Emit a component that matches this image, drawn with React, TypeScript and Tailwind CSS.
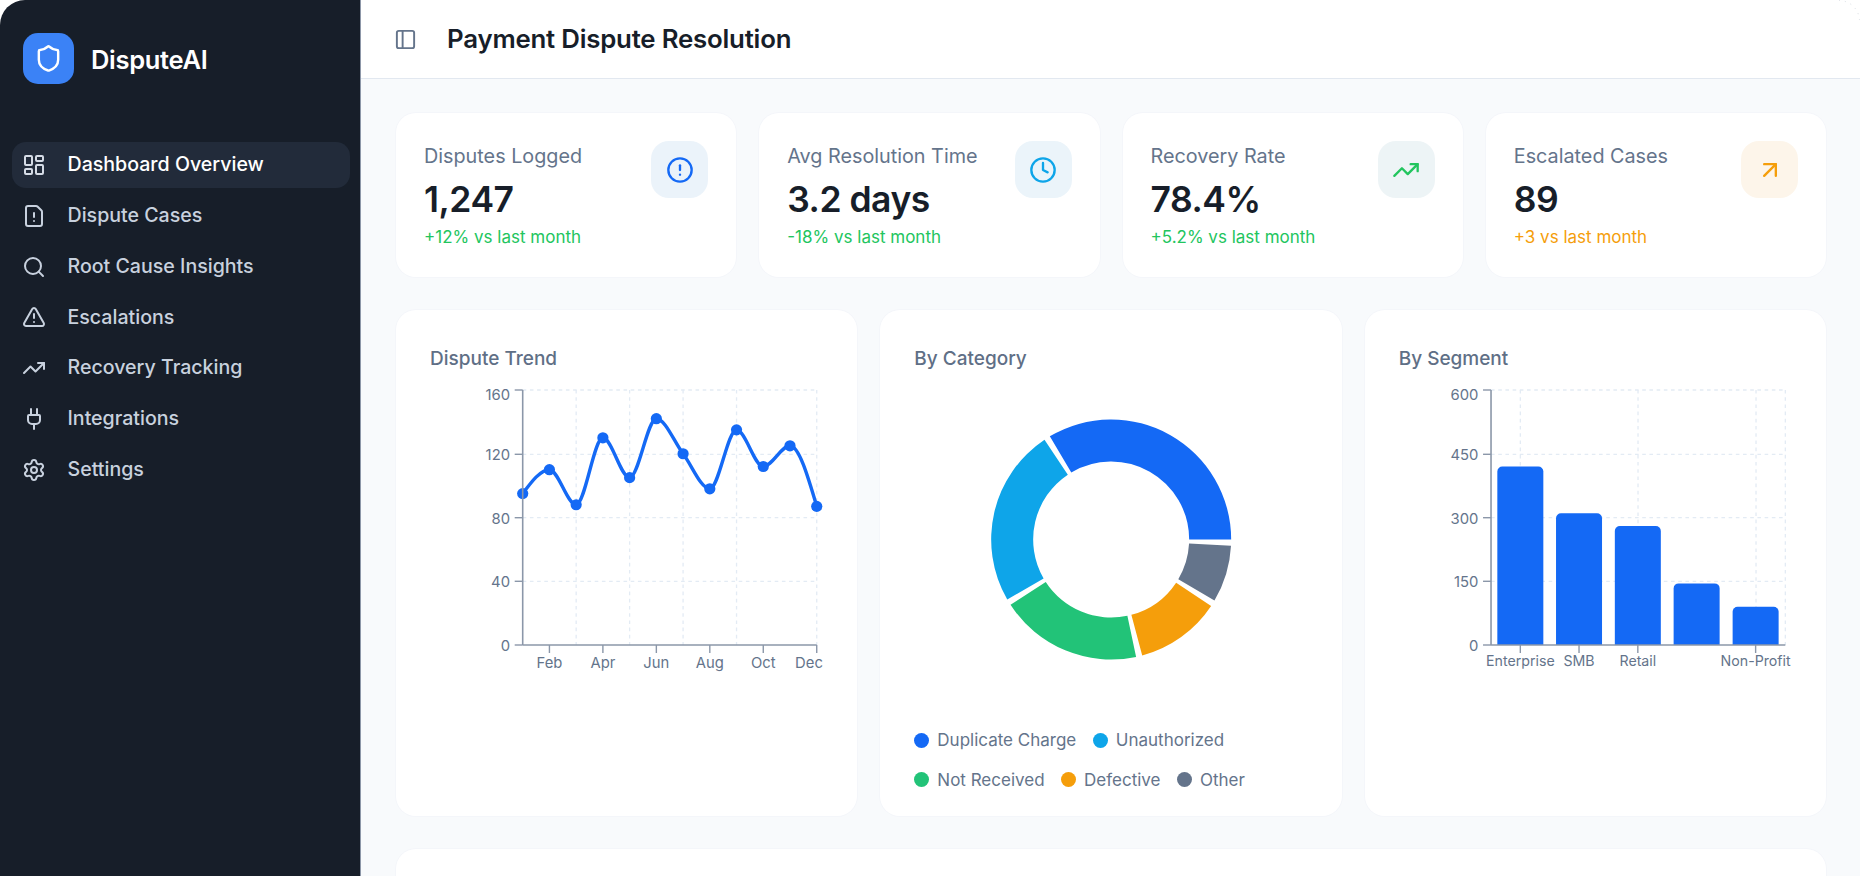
import { LayoutDashboard, FileWarning, Search, TriangleAlert, TrendingUp, Plug, Settings, Shield, PanelLeft, CircleAlert, Clock, ArrowUpRight } from "lucide-react";

const nav = [
  { label: "Dashboard Overview", Icon: LayoutDashboard, active: true },
  { label: "Dispute Cases", Icon: FileWarning },
  { label: "Root Cause Insights", Icon: Search },
  { label: "Escalations", Icon: TriangleAlert },
  { label: "Recovery Tracking", Icon: TrendingUp },
  { label: "Integrations", Icon: Plug },
  { label: "Settings", Icon: Settings },
];

const stats = [
  { label: "Disputes Logged", value: "1,247", delta: "+12% vs last month", Icon: CircleAlert, box: "bg-[#ebf3fa]", icon: "text-[#1469f5]", deltaC: "text-[#22c55e]" },
  { label: "Avg Resolution Time", value: "3.2 days", delta: "-18% vs last month", Icon: Clock, box: "bg-[#ebf4fa]", icon: "text-[#0ea5e9]", deltaC: "text-[#22c55e]" },
  { label: "Recovery Rate", value: "78.4%", delta: "+5.2% vs last month", Icon: TrendingUp, box: "bg-[#edf4f6]", icon: "text-[#22c55e]", deltaC: "text-[#22c55e]" },
  { label: "Escalated Cases", value: "89", delta: "+3 vs last month", Icon: ArrowUpRight, box: "bg-[#fdf5ea]", icon: "text-[#f59e0b]", deltaC: "text-[#f59e0b]" },
];

const BLUE = "#1469f5";
const GRID = "#e3ebf4";
const AXIS = "#8b97a9";
const TICK = "#64748b";
const TOP = 391;
const BOT = 646;

function monotone(pts: [number, number][]) {
  const n = pts.length;
  const h: number[] = [];
  const s: number[] = [];
  for (let i = 0; i < n - 1; i++) {
    h.push(pts[i + 1][0] - pts[i][0]);
    s.push((pts[i + 1][1] - pts[i][1]) / h[i]);
  }
  const t: number[] = new Array(n).fill(0);
  for (let i = 1; i < n - 1; i++) {
    const p = (s[i - 1] * h[i] + s[i] * h[i - 1]) / (h[i - 1] + h[i]);
    t[i] = (Math.sign(s[i - 1]) + Math.sign(s[i])) * Math.min(Math.abs(s[i - 1]), Math.abs(s[i]), 0.5 * Math.abs(p)) || 0;
  }
  t[0] = (3 * s[0] - t[1]) / 2;
  t[n - 1] = (3 * s[n - 2] - t[n - 2]) / 2;
  let d = `M${pts[0][0]},${pts[0][1]}`;
  for (let i = 0; i < n - 1; i++) {
    const dx = h[i] / 3;
    d += `C${pts[i][0] + dx},${pts[i][1] + dx * t[i]} ${pts[i + 1][0] - dx},${pts[i + 1][1] - dx * t[i + 1]} ${pts[i + 1][0]},${pts[i + 1][1]}`;
  }
  return d;
}

function Frame({ x0, axisX, right, yLabels, gridX, children }: { x0: number; axisX: number; right: number; yLabels: string[]; gridX: number[]; children: React.ReactNode }) {
  const ys = [391, 455.3, 518.7, 582.3, 646];
  return (
    <svg viewBox={`${x0} 380 393 300`} className="block h-[300px] w-[393px] overflow-visible">
      {ys.slice(0, 4).map((y) => (
        <line key={y} x1={axisX} x2={right} y1={y} y2={y} stroke={GRID} strokeWidth={1.3} strokeDasharray="3.6 3.6" />
      ))}
      {gridX.map((x) => (
        <line key={x} x1={x} x2={x} y1={TOP} y2={BOT} stroke={GRID} strokeWidth={1.3} strokeDasharray="3.6 3.6" />
      ))}
      {children}
      <line x1={axisX} x2={axisX} y1={TOP} y2={BOT} stroke={AXIS} strokeWidth={1.6} />
      <line x1={axisX} x2={right} y1={BOT} y2={BOT} stroke={AXIS} strokeWidth={1.6} />
      {ys.map((y, i) => (
        <g key={y}>
          <line x1={axisX - 8} x2={axisX} y1={y} y2={y} stroke={AXIS} strokeWidth={1.4} />
          <text x={axisX - 12.7} y={i === 0 ? y + 10.3 : y + 5.8} textAnchor="end" fontSize={14.8} fill={TICK}>{yLabels[i]}</text>
        </g>
      ))}
    </svg>
  );
}

function LineChart() {
  const vals = [95, 110, 88, 130, 105, 142, 120, 98, 135, 112, 125, 87];
  const x = (i: number) => 522.7 + i * 26.73;
  const pts = vals.map((v, i) => [x(i), BOT - (v / 160) * 255] as [number, number]);
  const ticks: [number, string, number][] = [[1, "Feb", x(1)], [3, "Apr", x(3)], [5, "Jun", x(5)], [7, "Aug", x(7)], [9, "Oct", x(9)], [11, "Dec", 809]];
  return (
    <Frame x0={430} axisX={522.7} right={816.7} yLabels={["160", "120", "80", "40", "0"]} gridX={[x(2), x(4), x(6), x(8), x(11)]}>
      <path d={monotone(pts)} fill="none" stroke={BLUE} strokeWidth={3.4} />
      {pts.map((p) => <circle key={p[0]} cx={p[0]} cy={p[1]} r={5.6} fill={BLUE} />)}
      {ticks.map(([i, l, lx]) => (
        <g key={l}>
          <line x1={x(i)} x2={x(i)} y1={BOT} y2={BOT + 8} stroke={AXIS} strokeWidth={1.4} />
          <text x={lx} y={669.3} textAnchor="middle" fontSize={14.8} fill={TICK}>{l}</text>
        </g>
      ))}
    </Frame>
  );
}

function BarChart() {
  const bars: [number, number, string][] = [[1497, 420, "Enterprise"], [1555.7, 310, "SMB"], [1614.5, 280, "Retail"], [1673.3, 145, ""], [1732.3, 90, "Non-Profit"]];
  const grid = [1520, 1637.7, 1755.7, 1785];
  return (
    <Frame x0={1398.67} axisX={1490.7} right={1785} yLabels={["600", "450", "300", "150", "0"]} gridX={grid}>
      {bars.map(([bx, v]) => {
        const top = BOT - (v / 600) * 255;
        return <path key={bx} d={`M${bx},${BOT}V${top + 5}a5,5 0 0 1 5,-5H${bx + 41}a5,5 0 0 1 5,5V${BOT}Z`} fill={BLUE} />;
      })}
      {bars.map(([bx, , l]) => l ? (
        <g key={bx}>
          <line x1={bx + 23} x2={bx + 23} y1={BOT} y2={BOT + 8} stroke={AXIS} strokeWidth={1.4} />
          <text x={bx + 23} y={667.3} textAnchor="middle" fontSize={14.2} fill={TICK}>{l}</text>
        </g>
      ) : null)}
    </Frame>
  );
}

function arc(a0: number, a1: number, R: number, r: number) {
  const cx = 1111.5, cy = 540.5;
  const p = (a: number, q: number) => `${cx + q * Math.cos((a * Math.PI) / 180)},${cy - q * Math.sin((a * Math.PI) / 180)}`;
  const large = a1 - a0 > 180 ? 1 : 0;
  return `M${p(a0, R)}A${R},${R} 0 ${large} 0 ${p(a1, R)}L${p(a1, r)}A${r},${r} 0 ${large} 1 ${p(a0, r)}Z`;
}

function Donut() {
  const segs: [number, number, string][] = [[0, 120.75, BLUE], [123.75, 210, "#0ea5e9"], [213, 282, "#22c378"], [285, 326.4, "#f59e0b"], [329.4, 357, "#64748b"]];
  return (
    <svg viewBox="914.33 380 393 300" className="block h-[300px] w-[393px]">
      {segs.map(([a, b, c]) => <path key={a} d={arc(a, b, 120, 78)} fill={c} />)}
    </svg>
  );
}

function LegendItem({ color, label }: { color: string; label: string }) {
  return (
    <div className="flex items-center gap-[8px]">
      <span className={`h-[15px] w-[15px] rounded-full ${color}`} />
      <span className="text-[17px] leading-[24px] text-[#64748b]">{label}</span>
    </div>
  );
}

const cardSkin = "rounded-[20px] bg-white shadow-[0_0_0_1px_#f4f6fa]";

function ChartCard({ title, children }: { title: string; children: React.ReactNode }) {
  return (
    <div className={`h-[506px] p-[34px] ${cardSkin}`}>
      <h3 className="mb-[5px] text-[19px] font-medium leading-[30px] text-[#5f6f86]">{title}</h3>
      {children}
    </div>
  );
}

export default function App() {
  return (
    <div className="flex h-[876px] w-full overflow-hidden bg-white font-['Inter',sans-serif]">
      <aside className="w-[361px] shrink-0 rounded-tl-[25px] border-r border-[#8d97a8] bg-[#171e29]">
        <div className="flex items-center gap-[17px] pl-[23px] pt-[33px]">
          <div className="flex h-[51px] w-[51px] items-center justify-center rounded-[15px] bg-[#3b82f6]">
            <Shield className="h-[29px] w-[29px] text-white" strokeWidth={2} />
          </div>
          <span className="mt-[3px] text-[25.5px] font-semibold tracking-[-0.3px] text-white">DisputeAI</span>
        </div>
        <nav className="mt-[58px] flex flex-col gap-[4.8px] pl-[12px] pr-[10px]">
          {nav.map(({ label, Icon, active }) => (
            <div key={label} className={`flex h-[46px] items-center gap-[21.5px] rounded-[14px] pl-[10px] text-[19.6px] font-medium ${active ? "bg-[#222b3a] text-white" : "text-[#c8d1de]"}`}>
              <Icon className={`h-[24px] w-[24px] ${active ? "text-[#d5dbe5]" : "text-[#c8d1de]"}`} strokeWidth={2} />
              <span>{label}</span>
            </div>
          ))}
        </nav>
      </aside>
      <main className="relative flex min-w-0 flex-1 flex-col">
        <svg viewBox="0 0 21 21" className="absolute right-0 top-0 h-[21px] w-[21px]">
          <path d="M0,0.5A20.5,20.5 0 0 1 20.5,21" fill="none" stroke="#d8dde3" strokeWidth={1} strokeDasharray="1 5" />
        </svg>
        <header className="flex h-[79px] shrink-0 items-center gap-[30px] border-b border-[#e2e8f0] bg-white pl-[33px]">
          <PanelLeft className="h-[23px] w-[23px] text-[#64748b]" strokeWidth={2} />
          <h1 className="mt-[1px] text-[25.8px] font-semibold tracking-[-0.2px] text-[#171e29]">Payment Dispute Resolution</h1>
        </header>
        <div className="flex flex-1 flex-col gap-[33px] overflow-hidden bg-[#f8fafc] pl-[35px] pr-[34px] pt-[34px]">
          <div className="grid grid-cols-4 gap-[23px]">
            {stats.map((s) => (
              <div key={s.label} className={`flex h-[164px] shrink-0 items-start justify-between p-[28px] ${cardSkin}`}>
                <div className="pt-[1px]">
                  <div className="text-[19.8px] leading-[28px] text-[#64748b]">{s.label}</div>
                  <div className="mt-[8px] text-[35.5px] font-semibold leading-[44px] tracking-[-0.5px] text-[#171e29]">{s.value}</div>
                  <div className="mt-[3px]"><span className={`text-[17px] leading-[24px] ${s.deltaC}`}>{s.delta}</span></div>
                </div>
                <div className={`flex h-[57px] w-[57px] shrink-0 items-center justify-center rounded-[18px] ${s.box}`}>
                  <s.Icon className={`h-[28px] w-[28px] ${s.icon}`} strokeWidth={2} />
                </div>
              </div>
            ))}
          </div>
          <div className="grid shrink-0 grid-cols-3 gap-[23px]">
            <ChartCard title="Dispute Trend"><LineChart /></ChartCard>
            <ChartCard title="By Category">
              <Donut />
              <div className="mt-[49px] flex flex-wrap gap-x-[16.5px] gap-y-[15.7px]">
                <LegendItem color="bg-[#1469f5]" label="Duplicate Charge" />
                <LegendItem color="bg-[#0ea5e9]" label="Unauthorized" />
                <LegendItem color="bg-[#22c378]" label="Not Received" />
                <LegendItem color="bg-[#f59e0b]" label="Defective" />
                <LegendItem color="bg-[#64748b]" label="Other" />
              </div>
            </ChartCard>
            <ChartCard title="By Segment"><BarChart /></ChartCard>
          </div>
          <div className={`h-[100px] shrink-0 ${cardSkin}`} />
        </div>
      </main>
    </div>
  );
}
